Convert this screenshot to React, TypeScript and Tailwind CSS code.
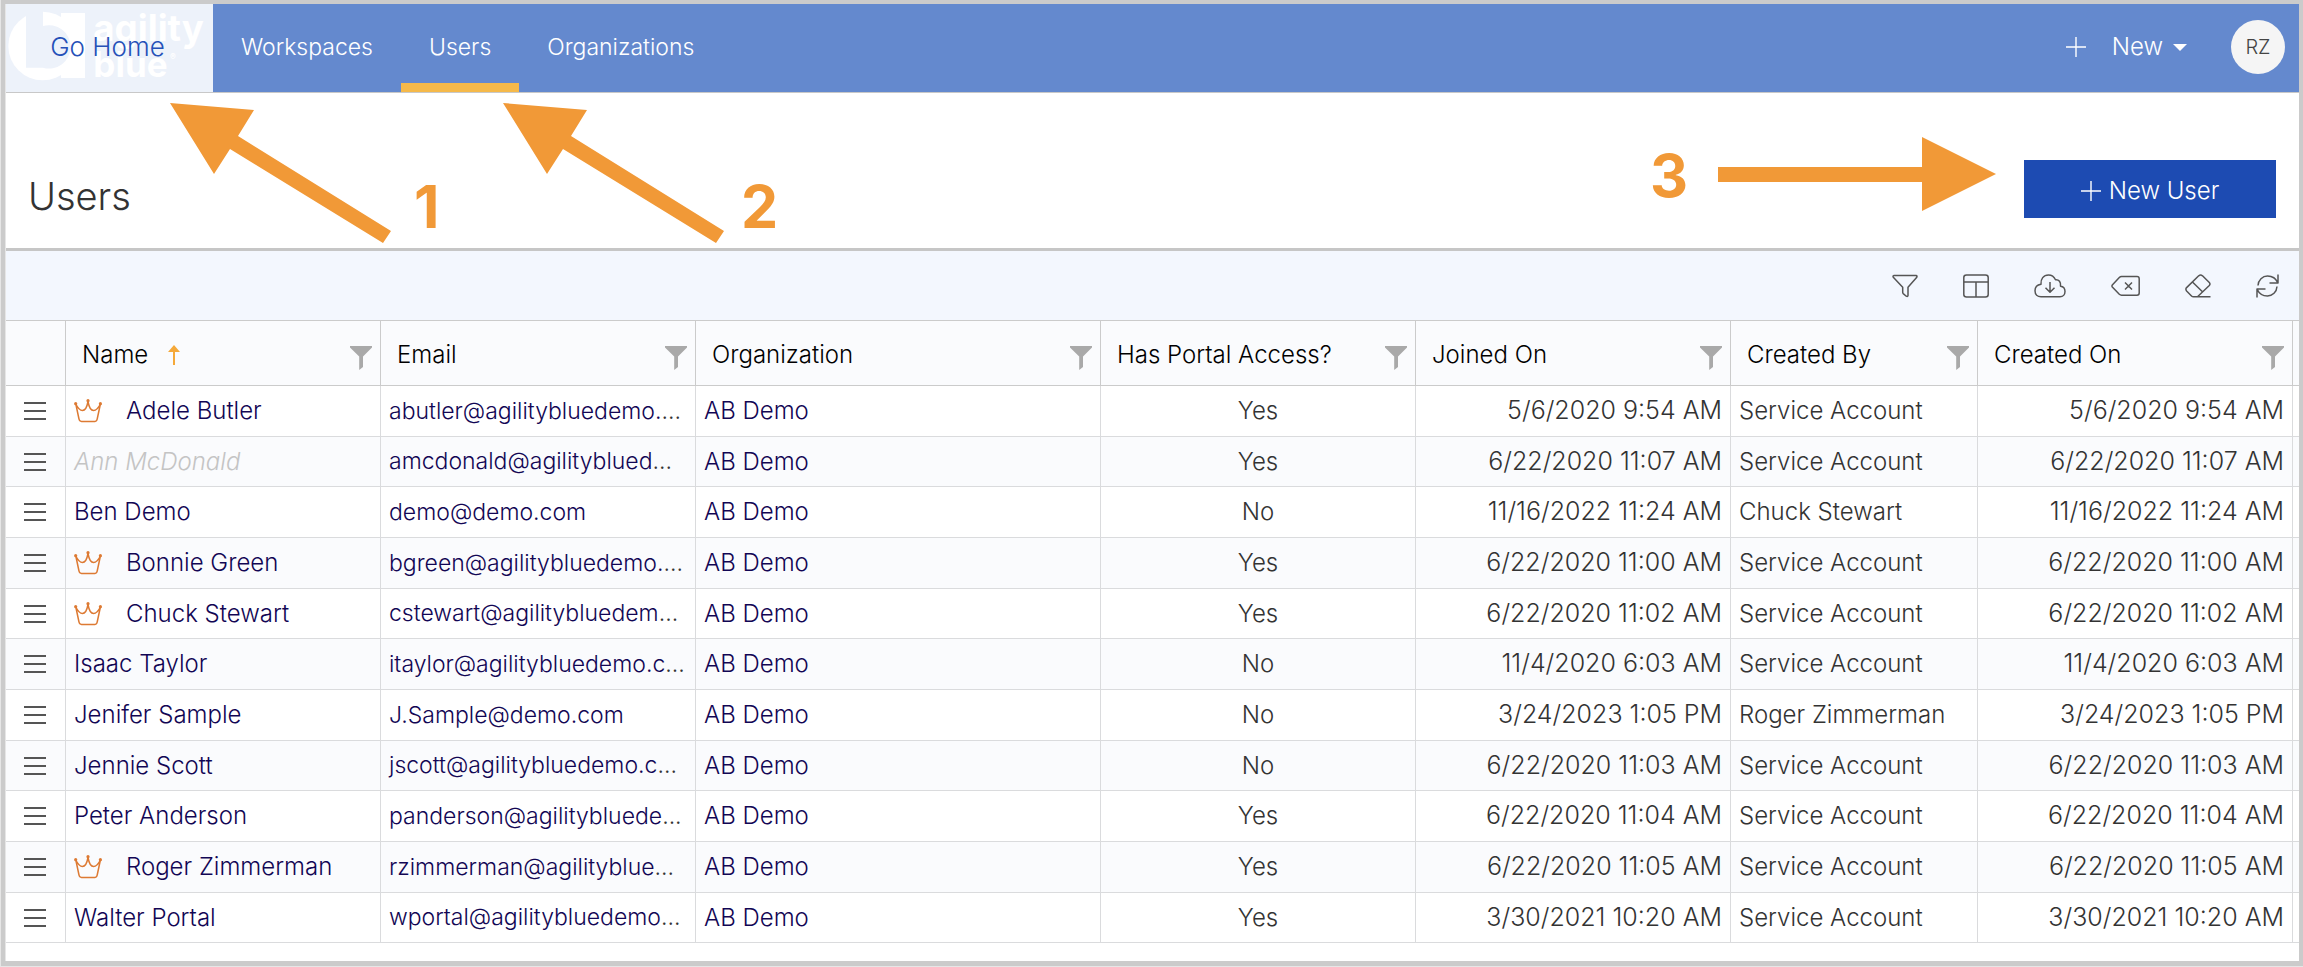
import React from "react";

interface User {
  name: string;
  email: string;
  hasPortalAccess: boolean;
  joinedOn: string;
  createdBy: string;
  createdOn: string;
  isAdmin?: boolean;
  inactive?: boolean;
  truncated?: boolean;
}

const users: User[] = [
  {
    name: "Adele Butler",
    email: "abutler@agilitybluedemo.",
    truncated: true,
    hasPortalAccess: true,
    joinedOn: "5/6/2020 9:54 AM",
    createdBy: "Service Account",
    createdOn: "5/6/2020 9:54 AM",
    isAdmin: true,
  },
  {
    name: "Ann McDonald",
    email: "amcdonald@agilityblued",
    truncated: true,
    hasPortalAccess: true,
    joinedOn: "6/22/2020 11:07 AM",
    createdBy: "Service Account",
    createdOn: "6/22/2020 11:07 AM",
    inactive: true,
  },
  {
    name: "Ben Demo",
    email: "demo@demo.com",
    hasPortalAccess: false,
    joinedOn: "11/16/2022 11:24 AM",
    createdBy: "Chuck Stewart",
    createdOn: "11/16/2022 11:24 AM",
  },
  {
    name: "Bonnie Green",
    email: "bgreen@agilitybluedemo.",
    truncated: true,
    hasPortalAccess: true,
    joinedOn: "6/22/2020 11:00 AM",
    createdBy: "Service Account",
    createdOn: "6/22/2020 11:00 AM",
    isAdmin: true,
  },
  {
    name: "Chuck Stewart",
    email: "cstewart@agilitybluedem",
    truncated: true,
    hasPortalAccess: true,
    joinedOn: "6/22/2020 11:02 AM",
    createdBy: "Service Account",
    createdOn: "6/22/2020 11:02 AM",
    isAdmin: true,
  },
  {
    name: "Isaac Taylor",
    email: "itaylor@agilitybluedemo.c",
    truncated: true,
    hasPortalAccess: false,
    joinedOn: "11/4/2020 6:03 AM",
    createdBy: "Service Account",
    createdOn: "11/4/2020 6:03 AM",
  },
  {
    name: "Jenifer Sample",
    email: "J.Sample@demo.com",
    hasPortalAccess: false,
    joinedOn: "3/24/2023 1:05 PM",
    createdBy: "Roger Zimmerman",
    createdOn: "3/24/2023 1:05 PM",
  },
  {
    name: "Jennie Scott",
    email: "jscott@agilitybluedemo.c",
    truncated: true,
    hasPortalAccess: false,
    joinedOn: "6/22/2020 11:03 AM",
    createdBy: "Service Account",
    createdOn: "6/22/2020 11:03 AM",
  },
  {
    name: "Peter Anderson",
    email: "panderson@agilitybluede",
    truncated: true,
    hasPortalAccess: true,
    joinedOn: "6/22/2020 11:04 AM",
    createdBy: "Service Account",
    createdOn: "6/22/2020 11:04 AM",
  },
  {
    name: "Roger Zimmerman",
    email: "rzimmerman@agilityblue",
    truncated: true,
    hasPortalAccess: true,
    joinedOn: "6/22/2020 11:05 AM",
    createdBy: "Service Account",
    createdOn: "6/22/2020 11:05 AM",
    isAdmin: true,
  },
  {
    name: "Walter Portal",
    email: "wportal@agilitybluedemo",
    truncated: true,
    hasPortalAccess: true,
    joinedOn: "3/30/2021 10:20 AM",
    createdBy: "Service Account",
    createdOn: "3/30/2021 10:20 AM",
  },
];

const columns = [
  "Name",
  "Email",
  "Organization",
  "Has Portal Access?",
  "Joined On",
  "Created By",
  "Created On",
];

function Logo() {
  return (
    <svg viewBox="0 0 621 264" className="h-full w-full" aria-hidden="true">
      <g fill="#fff">
        <circle cx="110" cy="126" r="103" />
        <path d="M165 27H237V222H165Z" />
      </g>
      <path
        fill="#edf2fa"
        d="M60 15H111V66A65 65 0 1 1 111 191H60Z"
      />
      <g fill="#fff" className="font-['Inter'] font-bold">
        <text x="262" y="112" fontSize="110">
          agility
        </text>
        <text x="262" y="219" fontSize="105">
          blue
        </text>
        <text x="492" y="167" fontSize="26">
          ®
        </text>
      </g>
    </svg>
  );
}

function Plus() {
  return (
    <svg width="20" height="20" viewBox="0 0 20 20" stroke="currentColor" strokeWidth="1.4">
      <path d="M10 0V20M0 10H20" />
    </svg>
  );
}

function Crown() {
  return (
    <svg width="28" height="24" viewBox="0 0 28 24" fill="none" stroke="#dd7a33" strokeWidth="1.5" strokeLinejoin="round">
      <path d="M1.8 5L5 20Q5.4 22.4 7.5 22.4H21Q22.8 22.4 23.2 20L26.4 5C24.5 9 21.5 11.5 19.5 11.5C17 11.5 15 8 14 2.5C13 8 11 11.5 8.5 11.5C6.5 11.5 3.7 9 1.8 5Z" />
      <g fill="#dd7a33" stroke="none">
        <circle cx="1.7" cy="4.7" r="1.6" />
        <circle cx="14" cy="1.7" r="1.6" />
        <circle cx="26.4" cy="4.7" r="1.6" />
      </g>
    </svg>
  );
}

function ColumnFilter() {
  return (
    <svg width="22" height="24" viewBox="0 0 22 24" fill="#a9a9a9">
      <path d="M0 0H22V1.5L13 10.5V21L9.2 24V10.5L0 1.5Z" />
    </svg>
  );
}

function ToolbarIcons() {
  const icons = [
    {
      label: "Toggle filters",
      width: 26,
      path: "M2 1.5H24Q25.5 1.8 24.8 3.3L16 13.3V21.5Q15.8 23 14.3 22.2L11.2 19.6Q10.7 19 10.7 18.3V13.3L1.3 3.3Q.5 1.8 2 1.5Z",
    },
    {
      label: "Columns",
      width: 26,
      path: "M3.5 1H22.5Q25.2 1 25.2 3.5V20.5Q25.2 23 22.5 23H3.5Q.8 23 .8 20.5V3.5Q.8 1 3.5 1ZM.8 8H25.2M13 8V23",
    },
    {
      label: "Download",
      width: 32,
      path: "M7 22.8H26C29 22.8 31 20.5 31 17.5C31 14.5 29 12.5 26.5 12.2C27 8 25 5.5 21.5 5.8C20 2.5 17.5 1 14.5 1C9.5 1 6.5 5 7 10.2C3.5 10.7 1 13 1 16.8C1 20.5 3.5 22.8 7 22.8ZM16 8V18M11.5 13.7L16 18.2L20.5 13.7",
    },
    {
      label: "Clear filters",
      width: 29,
      path: "M10.5 2.5H26Q28.2 2.5 28.2 4.7V19Q28.2 21.2 26 21.2H10.5Q9.3 21.2 8.3 20.3L1.3 13Q.6 12 1.3 11L8.3 3.5Q9.3 2.5 10.5 2.5ZM14 8.5L21 15.5M21 8.5L14 15.5",
    },
    {
      label: "Clear selection",
      width: 26,
      path: "M13.7 1.8L1.6 13.6Q.2 15.3 1.6 17L6.5 22Q7.3 22.8 8.5 22.8H12.5L24.3 11.5Q25.6 10 24.3 8.5L17.5 1.8Q15.6 .4 13.7 1.8ZM7.7 8.2L17.7 18M12.5 22.8H25.5",
    },
    {
      label: "Refresh",
      width: 23,
      path: "M22 .5V9H13.5M1 23.5V15H9.5M2 11.5C2.3 6 6.5 2 11.5 2C16 2 20 4.5 22 9M21 12.5C20.7 18 16.5 22 11.5 22C7 22 3 19.5 1 15",
    },
  ];

  return (
    <div className="flex items-center gap-[45px]">
      {icons.map((icon) => (
        <button key={icon.label} type="button" aria-label={icon.label}>
          <svg
            width={icon.width}
            height="24"
            viewBox={`0 0 ${icon.width} 24`}
            fill="none"
            stroke="#555"
            strokeWidth="1.5"
            strokeLinejoin="round"
          >
            <path d={icon.path} />
          </svg>
        </button>
      ))}
    </div>
  );
}

function NavBar() {
  return (
    <header className="flex h-[89px] border-b border-[#c8c8c8] bg-[#6489ce] text-2xl text-white">
      <a href="#home" className="relative w-[207px] bg-[#edf2fa]">
        <Logo />
        <span className="absolute inset-0 flex items-center justify-center pr-1 pb-0.5 text-[26px] text-[#2550b8]">
          Go Home
        </span>
      </a>
      <nav className="flex text-[23px]">
        <a href="#workspaces" className="flex items-center px-7 pb-0.5">
          Workspaces
        </a>
        <a href="#users" className="relative flex items-center px-7 pb-0.5">
          Users
          <span className="absolute inset-x-0 bottom-0 h-[9px] bg-[#f5b94a]" />
        </a>
        <a href="#organizations" className="flex items-center px-7 pb-0.5">
          Organizations
        </a>
      </nav>
      <div className="ml-auto flex items-center gap-11 pr-[14px] pb-0.5">
        <button type="button" className="flex items-center">
          <Plus />
          <span className="ml-[26px]">New</span>
          <svg width="14" height="7" viewBox="0 0 14 7" fill="#fff" className="ml-[10px]">
            <path d="M0 0H14L7 7Z" />
          </svg>
        </button>
        <button
          type="button"
          className="h-[54px] w-[54px] rounded-full bg-[#f5f5f5] text-xl text-[#444]"
        >
          RZ
        </button>
      </div>
    </header>
  );
}

// numbered arrows pointing out the steps for adding a user
function Callouts() {
  return (
    <>
      <svg
        width="620"
        height="155"
        viewBox="0 0 620 155"
        fill="#f19937"
        className="pointer-events-none absolute top-0 left-[164px]"
      >
        <path d="M0 10L84 17L68 43L221 138L213 150L60 56L44 81Z" />
        <path d="M333 10L417 17L401 43L554 138L546 150L393 56L377 81Z" />
        <g className="font-['Inter'] font-bold" fontSize="59">
          <text x="244" y="135">
            1
          </text>
          <text x="571" y="135">
            2
          </text>
        </g>
      </svg>
      <svg
        width="346"
        height="155"
        viewBox="0 0 346 155"
        fill="#f19937"
        className="pointer-events-none absolute top-0 right-[303px]"
      >
        <path d="M68 74H272V44L346 81L272 118V89H68Z" />
        <text x="0" y="104" fontSize="59" className="font-['Inter'] font-bold">
          3
        </text>
      </svg>
    </>
  );
}

function UserTable({ users }: { users: User[] }) {
  const cell = "border-r border-b border-[#dadbdd] px-2 whitespace-nowrap";
  const link = "text-[#120654]";

  return (
    <table className="w-full table-fixed border-separate border-spacing-0">
      <colgroup>
        <col className="w-[60px]" />
        <col className="w-[315px]" />
        <col className="w-[315px]" />
        <col />
        <col className="w-[315px]" />
        <col className="w-[315px]" />
        <col className="w-[247px]" />
        <col className="w-[315px]" />
        <col className="w-[6px]" />
      </colgroup>
      <thead className="bg-[#fafbfd] text-black">
        <tr className="h-[65px]">
          <th className="border-r border-b border-[#cbcbcb]" />
          {columns.map((column) => (
            <th
              key={column}
              className="border-r border-b border-[#cbcbcb] pt-1 pr-2 pl-4 text-left font-light"
            >
              <div className="flex items-center whitespace-nowrap">
                {column}
                {column === "Name" && (
                  <svg width="12" height="20" viewBox="0 0 12 20" fill="#f5a93a" className="ml-5">
                    <path d="M6 0L12 7H7V20H5V7H0Z" />
                  </svg>
                )}
                <button type="button" aria-label={`Filter ${column}`} className="ml-auto pt-1.5">
                  <ColumnFilter />
                </button>
              </div>
            </th>
          ))}
          <th className="border-b border-[#cbcbcb]" />
        </tr>
      </thead>
      <tbody>
        {users.map((user) => (
          <tr
            key={user.name}
            className="h-[51px] even:bg-[#fafbfd] nth-[3n+2]:h-[50px]"
          >
            <td className="border-r border-b border-[#dadbdd] pl-[18px]">
              <button type="button" aria-label={`Actions for ${user.name}`} className="block">
                <svg width="22" height="18" viewBox="0 0 22 18" stroke="#555" strokeWidth="1.8">
                  <path d="M0 1H22M0 9H22M0 17H22" />
                </svg>
              </button>
            </td>
            <td className={cell}>
              <div className="flex items-center gap-6">
                {user.isAdmin && <Crown />}
                <a href="#user" className={user.inactive ? "text-[#c4c4c4] italic" : link}>
                  {user.name}
                </a>
              </div>
            </td>
            <td className={`${cell} text-[23px]`}>
              <a href="#email" className={link}>
                {user.email}
              </a>
              {user.truncated && "..."}
            </td>
            <td className={cell}>
              <a href="#organization" className={link}>
                AB Demo
              </a>
            </td>
            <td className={`${cell} text-center`}>{user.hasPortalAccess ? "Yes" : "No"}</td>
            <td className={`${cell} text-right text-[25px]`}>{user.joinedOn}</td>
            <td className={cell}>{user.createdBy}</td>
            <td className={`${cell} text-right text-[25px]`}>{user.createdOn}</td>
            <td className="border-b border-[#dadbdd]" />
          </tr>
        ))}
      </tbody>
    </table>
  );
}

export default function App() {
  return (
    <div className="bg-[#e6e6e6] pb-px pl-px font-['Inter',sans-serif] text-2xl font-light text-[#333]">
      <div className="border-4 border-b-[5px] border-[#cbcbcb]">
        <div className="border-l border-[#e6e6e6] bg-white pb-[18px]">
          <NavBar />
          <section className="relative flex h-[158px] items-center justify-between border-b-3 border-[#c6c6c6] pt-12 pr-[23px] pl-[22px]">
            <h1 className="pt-1 text-[38px]">Users</h1>
            <button
              type="button"
              className="mb-3 flex h-[58px] w-[252px] items-center justify-center gap-2 bg-[#1d4bb2] pt-1 text-white"
            >
              <Plus />
              New User
            </button>
            <Callouts />
          </section>
          <div className="flex h-[70px] items-center justify-end border-b border-[#cbcbcb] bg-[#f3f7fe] pr-5">
            <ToolbarIcons />
          </div>
          <UserTable users={users} />
        </div>
      </div>
    </div>
  );
}
